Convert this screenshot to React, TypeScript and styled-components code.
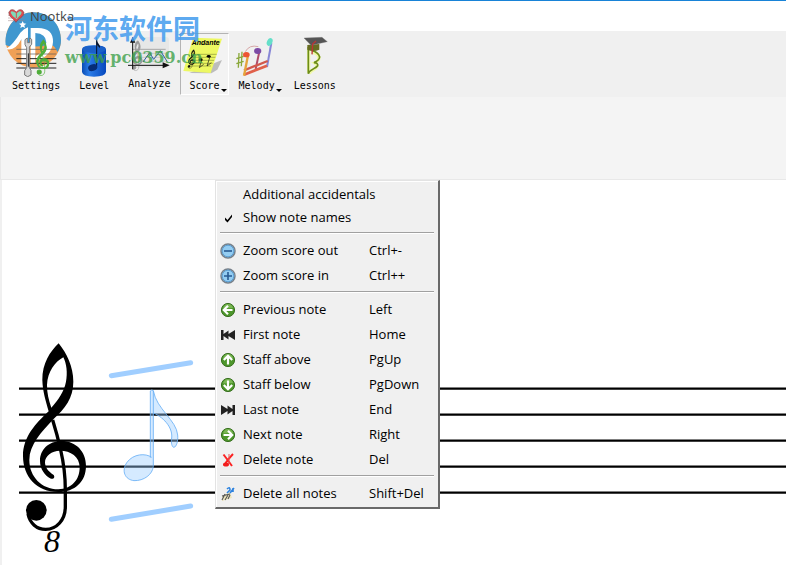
import React from "react";
import styled, { createGlobalStyle } from "styled-components";

const GlobalStyle = createGlobalStyle`
  * { box-sizing: border-box; }
  body { margin: 0; background: #ffffff; color: #000000; font-family: "Open Sans", "Noto Sans CJK SC", sans-serif; }
  button { font: inherit; color: inherit; border: 0; background: transparent; padding: 0; text-align: left; }
`;

const Window = styled.div`
  position: relative;
  display: flex;
  flex-direction: column;
  min-height: 100vh;
  overflow: hidden;
`;

const TitleBar = styled.header`
  display: flex;
  align-items: center;
  gap: 5px;
  height: 31px;
  padding-left: 8px;
  border-top: 1px solid #1883d7;
  background: #ffffff;
  svg, h1 { position: relative; z-index: 2; }
`;

const Title = styled.h1`
  margin: 0;
  font-size: 13px;
  font-weight: 400;
  line-height: 16px;
  color: #444444;
`;

const Toolbar = styled.nav`
  display: flex;
  align-items: flex-start;
  gap: 1px;
  height: 66px;
  padding: 2px 0 0 3px;
  background: #f0f0f0;
`;

const Tool = styled.button<{ $active?: boolean; $raised?: boolean }>`
  position: relative;
  z-index: ${(p) => (p.$raised ? 2 : 0)};
  display: flex;
  flex-direction: column;
  align-items: center;
  flex: none;
  min-width: 48px;
  height: 62px;
  padding: 1px 8px 0;
  border: 1px solid transparent;
  ${(p) => p.$active && "border-color: #b4b4b4 #ffffff #ffffff #b4b4b4; background: #f3f3f3;"}
  svg { display: block; margin: 0 -8px; }
`;

const ToolLabel = styled.span`
  font: 10px/17px "DejaVu Sans Mono", monospace;
`;

const DropArrow = styled.span`
  position: absolute;
  right: 1px;
  bottom: 2px;
  border: 3px solid transparent;
  border-top-color: #000000;
  border-bottom: 0;
`;

const NotePanel = styled.section`
  height: 83px;
  background: #f4f4f4;
  border-left: 1px solid #e8e8e8;
  border-bottom: 1px solid #e8e8e8;
`;

const ScoreView = styled.main`
  position: relative;
  flex: 1;
  min-height: 385px;
  border-left: 2px solid #f0f0f0;
`;

const Staff = styled.svg`
  display: block;
  width: 100%;
  height: 385px;
`;

const Menu = styled.div`
  position: absolute;
  left: 213px;
  top: 0;
  width: 225px;
  padding: 2px 3px 1px 2px;
  background: #f0f0f0;
  border: solid;
  border-width: 1px 2px 2px 1px;
  border-color: #e3e3e3 #696969 #696969 #e3e3e3;
  box-shadow: inset 1px 1px #ffffff;
`;

const MenuRow = styled.button<{ $short?: boolean }>`
  display: grid;
  grid-template-columns: 25px 126px 1fr;
  align-items: center;
  width: 100%;
  height: ${(p) => (p.$short ? 23 : 25)}px;
  font-size: 13px;
  line-height: 18px;
  white-space: nowrap;
  svg { display: block; margin-left: 2px; }
  span { padding-bottom: 2px; }
`;

const Separator = styled.hr`
  height: 2px;
  margin: 3px 1px 4px 2px;
  border: 0;
  border-top: 1px solid #a0a0a0;
  border-bottom: 1px solid #ffffff;
`;

const Watermark = styled.div`
  position: absolute;
  z-index: 1;
  left: 4px;
  top: 11px;
  display: flex;
  gap: 2px;
  pointer-events: none;
`;

const WatermarkText = styled.div`
  display: flex;
  flex-direction: column;
`;

const SiteName = styled.span`
  font: 700 27px/34px "Noto Sans CJK SC", sans-serif;
  color: rgba(72, 158, 238, 0.9);
`;

const SiteAddress = styled.span`
  font: 700 16px/26px "DejaVu Serif", serif;
  color: rgba(62, 160, 74, 0.8);
`;

const CLEF =
  "M176 40C150 65 127 100 127 150C128 185 138 215 146 244C108 280 69 320 69 378C69 440 110 486 175 486C225 486 258 455 258 408C258 365 228 333 185 333C145 333 120 360 120 392C120 418 135 437 153 446C162 449 166 439 160 434C145 425 135 412 135 397C135 378 155 362 180 362C212 362 239 380 239 412C239 450 215 477 175 478C125 478 88 440 88 390C88 345 125 305 160 268C195 235 220 205 220 155C220 110 200 70 176 40ZM190 82C200 100 203 130 198 155C192 185 175 210 154 233C146 210 141 190 141 165C143 125 165 95 190 82Z";
const CLEF_TAIL = "M158 270Q172 315 182 360Q196 420 196 480V530C196 570 170 598 137 598C110 598 90 580 84 552";

const Clef = ({ transform, color = "#000" }: { transform: string; color?: string }) => (
  <g transform={transform}>
    <path d={CLEF} fill={color} fillRule="evenodd" />
    <path d={CLEF_TAIL} fill="none" stroke={color} strokeWidth="10" />
    <circle cx="109" cy="541" r="31" fill={color} />
  </g>
);

const SettingsIcon = () => (
  <svg width="42" height="42" viewBox="48 105 126 126" aria-hidden="true">
    <path d="M52 148H172M52 162H172" stroke="#555" strokeWidth="2" />
    <path d="M52 176H172M52 190H172M52 204H172" stroke="#222" strokeWidth="3" />
    <path d="M78 119v15l5 9v60l-6 9v13l9 5 10-5v-14l-5-8v-62l7-8v-15l-6-4v14h-7v-14z" fill="#d9d9d9" stroke="#777" strokeWidth="3" />
    <path d="M88 160V200" stroke="#222" strokeWidth="3" />
    <g stroke="#4fae3a" strokeWidth="18">
      <Clef transform="translate(100 113) scale(.19)" color="#4fae3a" />
    </g>
  </svg>
);

const LevelIcon = () => (
  <svg width="42" height="42" viewBox="222 105 126 126" aria-hidden="true">
    <defs>
      <linearGradient id="barrel"><stop stopColor="#0a4cb4" /><stop offset=".3" stopColor="#2a7ce8" /><stop offset="1" stopColor="#0648bd" /></linearGradient>
    </defs>
    <path d="M249 148Q250 136 285 136Q320 136 321 148V216Q319 230 285 230Q251 230 249 216Z" fill="url(#barrel)" />
    <ellipse cx="285" cy="148" rx="35" ry="11" fill="#1a60c8" />
    <path d="M293 112V202" stroke="#07152f" strokeWidth="3" />
    <path d="M292 113Q294 128 303 138V144Q296 136 292 134Z" fill="#07152f" />
    <ellipse cx="281" cy="203" rx="14" ry="10" fill="#062c77" transform="rotate(-18 281 203)" />
  </svg>
);

const AnalyzeIcon = () => (
  <svg width="42" height="40" viewBox="387 105 126 120" aria-hidden="true">
    <rect x="401" y="111" width="109" height="92" rx="10" fill="#e7e7e7" />
    <path d="M400 148H500" stroke="#888" strokeWidth="2" />
    <path d="M400 160H500M400 172H500M400 184H500" stroke="#bbb" strokeWidth="2" />
    <g stroke="#999" strokeWidth="18">
      <Clef transform="translate(388 116) scale(.16)" color="#999" />
    </g>
    <path d="M401 118V208M387 196H501" stroke="#111" strokeWidth="3" />
    <path d="M401 110l-8 18h16zM512 196l-21-9v18z" fill="#111" />
    <path d="M432 186l20-28 12 20 20-26 20 32" fill="none" stroke="#315aa2" strokeWidth="3" />
  </svg>
);

const ScoreIcon = () => (
  <svg width="42" height="42" viewBox="51 30 126 126" aria-hidden="true">
    <path d="M70 144L168 105L154 134L136 145Z" fill="#bcbcbc" />
    <path d="M81 38L168 41L134 144L52 138Z" fill="#edf862" />
    <path d="M78 88H152M75 97H148M72 106H144M70 115H140M67 123H135" stroke="#68722a" strokeWidth="1.5" />
    <text x="77" y="61" fontFamily="Liberation Sans" fontSize="21" fontWeight="700" fontStyle="italic">Andante</text>
    <g stroke="#111" strokeWidth="14">
      <Clef transform="translate(66 70) skewX(-8) scale(.1)" />
    </g>
    <path d="M107 106l-7 22 13-10M132 95l-9 28 13-10" fill="none" stroke="#111" strokeWidth="2" />
    <ellipse cx="104" cy="104" rx="6" ry="4" /><ellipse cx="128" cy="94" rx="6" ry="4" />
  </svg>
);

const MelodyIcon = () => (
  <svg width="42" height="42" viewBox="207 30 126 126" aria-hidden="true">
    <path d="M216 84l-2 44M225 80l-2 44M208 101l22-7M208 116l22-7" stroke="#8aa83b" strokeWidth="4" />
    <path d="M300 126L313 54" fill="none" stroke="#8787d6" strokeWidth="6" />
    <path d="M266 132L277 80" fill="none" stroke="#b04c69" strokeWidth="6" />
    <path d="M231 136L302 108" stroke="#d2584c" strokeWidth="7" />
    <path d="M231 149L300 122" stroke="#e0604a" strokeWidth="8" />
    <path d="M231 152L243 91" stroke="#e5a43b" strokeWidth="7" />
    <path d="M235 80Q247 58 274 65" fill="none" stroke="#d6a6a6" strokeWidth="3" />
    <ellipse cx="238" cy="89" rx="10" ry="8" fill="#ed5533" /><ellipse cx="272" cy="78" rx="11" ry="9" fill="#7c4ba5" /><ellipse cx="308" cy="51" rx="8" ry="12" fill="#65dfc9" transform="rotate(25 308 51)" />
  </svg>
);

const LessonsIcon = () => (
  <svg width="42" height="42" viewBox="372 30 126 126" aria-hidden="true">
    <path d="M416 66V143M427 82Q450 86 446 104Q441 112 434 114Q448 124 434 131Q422 137 417 146" fill="none" stroke="#f0f8a8" strokeWidth="10" />
    <path d="M415 66V146C419 133 436 132 443 122Q445 114 432 113Q448 106 449 96Q446 82 425 76" fill="none" stroke="#6d8c1a" strokeWidth="5" />
    <path d="M412 60v14q17 8 36 0V57z" fill="#666b22" />
    <path d="M402 39L456 37L472 50L423 61Z" fill="#555" stroke="#777" />
    <path d="M438 48l-10 9-2 31" fill="none" stroke="#bd3434" strokeWidth="4" />
  </svg>
);

const HeartIcon = () => (
  <svg width="17" height="16" viewBox="24 20 51 48" aria-hidden="true">
    <path d="M24 34H74M24 42H74M24 50H74M24 58H74" stroke="#9a8585" strokeWidth="1.5" />
    <path d="M48 63C40 50 27 48 27 35C28 22 43 22 49 33C55 22 70 22 71 35C71 48 56 50 48 63Z" fill="#e04a50" stroke="#8b4144" strokeWidth="2" />
    <path d="M32 34Q33 27 41 31L50 36L58 30Q68 29 63 39L50 54L38 44Z" fill="#7fdcb8" />
    <path d="M49 32V50" stroke="#d5504f" strokeWidth="3" />
  </svg>
);

const SiteLogo = () => (
  <svg width="59" height="57" viewBox="12 33 177 171" aria-hidden="true">
    <circle cx="100" cy="120" r="83" fill="#f0a056" />
    <path d="M17 135C12 75 56 37 100 37C151 37 183 75 183 120C183 134 180 145 172 156C165 138 158 132 140 136Q110 142 82 138L60 118L32 140Z" fill="#3f97cf" />
    <path d="M18 147Q39 134 61 98Q72 86 84 82V194L64 188V118Q46 154 18 147Z" fill="#fff" />
    <path d="M92 84H114Q160 84 159 126Q156 166 108 184V168Q138 152 139 127Q138 101 106 99V188L92 192Z" fill="#fff" />
    <path d="M68 63l3 7 8 1-6 5 2 8-7-4-7 4 2-8-6-5 8-1z" fill="#fff" />
  </svg>
);

type IconKind = "check" | "out" | "in" | "left" | "up" | "down" | "right" | "first" | "last" | "delete" | "clear";
const ROTATION: Partial<Record<IconKind, number>> = { left: 0, up: 90, right: 180, down: 270 };

const MenuIcon = ({ kind }: { kind?: IconKind }) => {
  if (!kind) return <span />;
  const turn = ROTATION[kind];
  return (
    <svg width="16" height="16" viewBox="0 0 16 16" aria-hidden="true">
      {kind === "check" && <path d="M5 7.5V10L7.5 12.5L12 7V4.5L7.5 10Z" fill="#000" />}
      {(kind === "out" || kind === "in") && (
        <>
          <circle cx="8" cy="8" r="7" fill="#94cdf2" stroke="#77808a" strokeWidth="1.5" />
          <circle cx="8" cy="8" r="5.8" fill="none" stroke="#5c9fd3" />
          <path d={kind === "in" ? "M4 8H12M8 4V12" : "M4 8H12"} stroke="#275a91" strokeWidth="1.6" />
        </>
      )}
      {turn !== undefined && (
        <>
          <circle cx="8" cy="8" r="6.6" fill="#4d962b" stroke="#397021" />
          <path d="M3 6.5Q4 2 8 2Q12 2 13 6Z" fill="#79b553" />
          <path d="M8 3.8L3.8 8L8 12.2M4 8H12.5" fill="none" stroke="#fff" strokeWidth="2.2" transform={`rotate(${turn} 8 8)`} />
        </>
      )}
      {(kind === "first" || kind === "last") && (
        <path d="M1 3H3.5V7L8.5 3.5V7L15 3V13L8.5 9V12.5L3.5 9V13H1Z" fill="#222" transform={kind === "last" ? "rotate(180 8 8)" : undefined} />
      )}
      {kind === "delete" && (
        <>
          <path d="M3.5 2.5Q7 7 12 14M13 2Q8 7 4 13.5" stroke="#fb2222" strokeWidth="2" fill="none" />
          <path d="M9 2V12" stroke="#e85555" /><ellipse cx="6" cy="12.5" rx="3" ry="2" fill="#f21d1d" />
        </>
      )}
      {kind === "clear" && (
        <>
          <path d="M2 10L10 6L12 12L2 15Z" fill="#eee6bd" />
          <path d="M2 14L5 8M5 14L8 9M8 13L10 9M2 10L10 8" stroke="#555" strokeWidth="1.1" />
          <path d="M10 7L14 2M7 3Q10 0 10 4L7 7M13 2V6" fill="none" stroke="#2c82df" strokeWidth="1.6" />
        </>
      )}
    </svg>
  );
};

type Entry = { label: string; keys?: string; icon?: IconKind };
const GROUPS: Entry[][] = [
  [{ label: "Additional accidentals" }, { label: "Show note names", icon: "check" }],
  [{ label: "Zoom score out", keys: "Ctrl+-", icon: "out" }, { label: "Zoom score in", keys: "Ctrl++", icon: "in" }],
  [
    { label: "Previous note", keys: "Left", icon: "left" },
    { label: "First note", keys: "Home", icon: "first" },
    { label: "Staff above", keys: "PgUp", icon: "up" },
    { label: "Staff below", keys: "PgDown", icon: "down" },
    { label: "Last note", keys: "End", icon: "last" },
    { label: "Next note", keys: "Right", icon: "right" },
    { label: "Delete note", keys: "Del", icon: "delete" },
  ],
  [{ label: "Delete all notes", keys: "Shift+Del", icon: "clear" }],
];

const TOOLS = [
  { label: "Settings", Icon: SettingsIcon, raised: true },
  { label: "Level", Icon: LevelIcon },
  { label: "Analyze", Icon: AnalyzeIcon },
  { label: "Score", Icon: ScoreIcon, active: true, menu: true },
  { label: "Melody", Icon: MelodyIcon, menu: true },
  { label: "Lessons", Icon: LessonsIcon },
];

const STAFF_LINES = [208, 234, 260, 286, 312];

export default function App() {
  return (
    <Window>
      <GlobalStyle />
      <TitleBar>
        <HeartIcon />
        <Title>Nootka</Title>
      </TitleBar>
      <Toolbar>
        {TOOLS.map(({ label, Icon, active, menu, raised }) => (
          <Tool key={label} type="button" $active={active} $raised={raised}>
            <Icon />
            <ToolLabel>{label}</ToolLabel>
            {menu && <DropArrow />}
          </Tool>
        ))}
      </Toolbar>
      <NotePanel />
      <ScoreView>
        <Staff role="img" aria-label="Empty staff with treble clef">
          {STAFF_LINES.map((y) => (
            <line key={y} x1="17" x2="100%" y1={y + 0.6} y2={y + 0.6} stroke="#000" strokeWidth="2.3" />
          ))}
          <Clef transform="translate(-2 150) scale(.3333)" />
          <text x="42" y="372" fontFamily="Liberation Serif" fontStyle="italic" fontSize="32">8</text>
          <g transform="translate(98 170) scale(.3333)">
            <path d="M34 77L272 38M34 508L272 468" stroke="#a0ceff" strokeWidth="15" strokeLinecap="round" />
            <g fill="#9accff" fillOpacity=".42" stroke="#69b0f5" strokeOpacity=".85" strokeWidth="3">
              <path d="M155 322C137 309 100 311 81 337C63 363 75 389 102 392C132 393 158 373 160 349V189C195 204 222 238 214 270C214 284 217 292 222 292C229 291 235 273 233 255C230 211 169 177 160 122Q155 117 151 123V323" />
              <path d="M160 122V189" />
            </g>
          </g>
        </Staff>
        <Menu role="menu" aria-label="Score">
          {GROUPS.map((group, i) => (
            <React.Fragment key={group[0].label}>
              {i > 0 && <Separator />}
              {group.map((e) => (
                <MenuRow key={e.label} type="button" role="menuitem" $short={i === 0}>
                  <MenuIcon kind={e.icon} />
                  <span>{e.label}</span>
                  <span>{e.keys}</span>
                </MenuRow>
              ))}
            </React.Fragment>
          ))}
        </Menu>
      </ScoreView>
      <Watermark>
        <SiteLogo />
        <WatermarkText>
          <SiteName lang="zh-CN">河东软件园</SiteName>
          <SiteAddress>www.pc0359.cn</SiteAddress>
        </WatermarkText>
      </Watermark>
    </Window>
  );
}
